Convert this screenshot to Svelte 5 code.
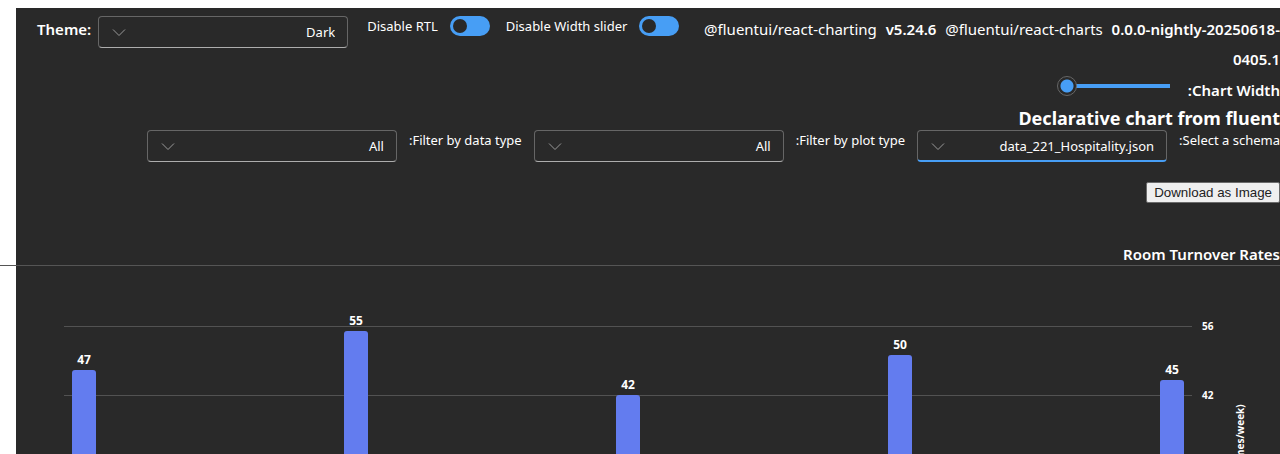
<script>
  const versions = { charting: 'v5.24.6', nightly: ['0.0.0-nightly-20250618-', '0405.1'] };
  const filters = [
    { id: 'schema', label: 'Select a schema:', value: 'data_221_Hospitality.json', active: true },
    { id: 'plot', label: 'Filter by plot type:', value: 'All' },
    { id: 'data', label: 'Filter by data type:', value: 'All' }
  ];
  const bars = [47, 55, 42, 50, 45];
  const ticks = [56, 42];
  const max = 56;
</script>

{#snippet dropdown(id, value, active = false)}
  <span class="dropdown" class:active dir="rtl">
    <select {id}><option>{value}</option></select>
    <svg class="chevron" viewBox="0 0 20 20" aria-hidden="true">
      <path d="M4 7.5 L10 13.5 L16 7.5" />
    </svg>
  </span>
{/snippet}

<main class="page">
  <div class="topbar">
    <label class="theme" for="theme">Theme:</label>
    {@render dropdown('theme', 'Dark')}
    <div class="switches">
      <label for="rtl">Disable RTL</label>
      <input id="rtl" class="switch" type="checkbox" role="switch" checked />
      <label for="slider">Disable Width slider</label>
      <input id="slider" class="switch" type="checkbox" role="switch" checked />
    </div>
    <div class="versions">
      @fluentui/react-charting&nbsp; <b>{versions.charting}</b>&nbsp; @fluentui/react-charts&nbsp; <b>{versions.nightly[0]}<br />{versions.nightly[1]}</b>
    </div>
  </div>

  <div class="width-row" dir="rtl">
    <label for="width">Chart Width:</label>
    <input id="width" type="range" min="0" max="100" value="100" />
  </div>

  <h2>Declarative chart from fluent</h2>

  <div class="filters" dir="rtl">
    {#each filters as f}
      <label for={f.id}>{f.label}</label>
      {@render dropdown(f.id, f.value, f.active)}
    {/each}
  </div>

  <div class="actions"><button type="button">Download as Image</button></div>

  <h3>Room Turnover Rates</h3>
  <hr />

  <div class="chart">
    <div class="plot">
      {#each ticks as t}
        <div class="grid" style="bottom: {(t / max) * 100}%"></div>
      {/each}
      {#each bars as v}
        <div class="bar" style="height: {(v / max) * 100}%"><span>{v}</span></div>
      {/each}
    </div>
    <div class="ticks">
      {#each ticks as t}
        <span style="bottom: {(t / max) * 100}%">{t}</span>
      {/each}
    </div>
    <div class="axis-title">(times/week)</div>
  </div>
</main>

<style>
  :global(body) {
    margin: 0;
    background: #fff;
  }
  :global(#app) {
    height: 100vh;
    overflow: hidden;
  }
  .page {
    box-sizing: border-box;
    margin: 8px 0 0 16px;
    min-height: 100vh;
    background: #292929;
    color: #fff;
    font: 14px/20px 'Noto Sans', 'Open Sans', sans-serif;
  }
  .topbar {
    display: flex;
    align-items: flex-start;
    padding: 8px 0 0 21px;
    height: 60px;
  }
  .theme {
    font-size: 15px;
    line-height: 26px;
    font-weight: 600;
    margin-right: 7px;
  }
  .dropdown {
    position: relative;
    flex: none;
    width: 250px;
    height: 32px;
  }
  select {
    appearance: none;
    box-sizing: border-box;
    width: 100%;
    height: 32px;
    margin: 0;
    padding: 0 12px 0 40px;
    border: 1px solid #666;
    border-bottom-color: #adadad;
    border-radius: 4px;
    background: #292929;
    color: #fff;
    font: inherit;
    font-size: 13px;
    display: block;
  }
  .active select {
    border-bottom: 2px solid #479ef5;
  }
  .chevron {
    position: absolute;
    left: 11px;
    top: 6px;
    width: 20px;
    height: 20px;
    pointer-events: none;
  }
  .chevron path {
    fill: none;
    stroke: #999;
    stroke-width: 1;
  }
  .switches {
    display: flex;
    align-items: center;
    font-size: 13px;
    margin-left: 19px;
    white-space: nowrap;
  }
  .switch {
    appearance: none;
    flex: none;
    width: 40px;
    height: 20px;
    margin: 0 16px 0 12px;
    border-radius: 10px;
    background: #479ef5;
    display: flex;
    align-items: center;
    padding: 0 3px;
    box-sizing: border-box;
  }
  .switch::before {
    content: '';
    width: 14px;
    height: 14px;
    border-radius: 50%;
    background: #292929;
  }
  .versions {
    flex: 1;
    text-align: right;
    white-space: nowrap;
    font-size: 15px;
    line-height: 30px;
    margin-top: -2px;
  }
  b {
    font-weight: 600;
    margin-left: 1px;
  }
  .versions b:first-of-type {
    margin-right: 1px;
  }
  .width-row {
    display: flex;
    align-items: flex-start;
    height: 30px;
  }
  .width-row label {
    font-size: 15px;
    font-weight: 600;
    line-height: 28px;
    margin-left: 18px;
  }
  input[type='range'] {
    appearance: none;
    width: 113px;
    height: 20px;
    margin: 0;
    background: linear-gradient(#479ef5, #479ef5) center / 100% 4px no-repeat;
    background-size: calc(100% - 10px) 4px;
    background-position: right center;
    border-radius: 2px;
  }
  input[type='range']::-webkit-slider-thumb {
    appearance: none;
    box-sizing: border-box;
    width: 20px;
    height: 20px;
    border: 1px solid #666;
    border-radius: 50%;
    background: radial-gradient(circle, #479ef5 6px, #292929 7px);
  }
  h2 {
    margin: 0;
    font-size: 18px;
    line-height: 24px;
    font-weight: 700;
    text-align: right;
  }
  .filters {
    display: flex;
    font-size: 13px;
  }
  .filters .dropdown {
    margin: 0 12px;
  }
  .actions {
    display: flex;
    justify-content: flex-end;
    padding-top: 20px;
  }
  button {
    height: 21px;
    padding: 0 7px;
    border: 1px solid #6b6b6b;
    border-radius: 2px;
    background: #efefef;
    color: #222;
    font-family: 'Liberation Sans', sans-serif;
  }
  h3 {
    margin: 41px 0 1px;
    font-size: 15px;
    line-height: 20px;
    font-weight: 600;
    text-align: right;
  }
  hr {
    margin: 0 0 0 -16px;
    border: 0;
    border-top: 1px solid #555;
  }
  .chart {
    display: flex;
    height: 274px;
    padding: 60px 0 0 48px;
    font-weight: 700;
  }
  .plot {
    position: relative;
    flex: 1;
    display: flex;
    justify-content: space-between;
    align-items: flex-end;
    padding: 0 8px;
  }
  .grid {
    position: absolute;
    left: 0;
    right: 0;
    height: 1px;
    margin-bottom: -1px;
    background: #525252;
  }
  .bar {
    position: relative;
    width: 24px;
    border-radius: 3px 3px 0 0;
    background: #637cef;
    display: flex;
    justify-content: center;
  }
  .bar span {
    margin-top: -20px;
    font-size: 12px;
    line-height: 20px;
  }
  .ticks {
    position: relative;
    width: 40px;
    font-size: 10px;
  }
  .ticks span {
    position: absolute;
    left: 10px;
    transform: translateY(50%);
  }
  .axis-title {
    width: 48px;
    padding-bottom: 78px;
    box-sizing: border-box;
    writing-mode: vertical-rl;
    transform: rotate(180deg);
    line-height: 16px;
    font-size: 10px;
    text-align: right;
  }
</style>
